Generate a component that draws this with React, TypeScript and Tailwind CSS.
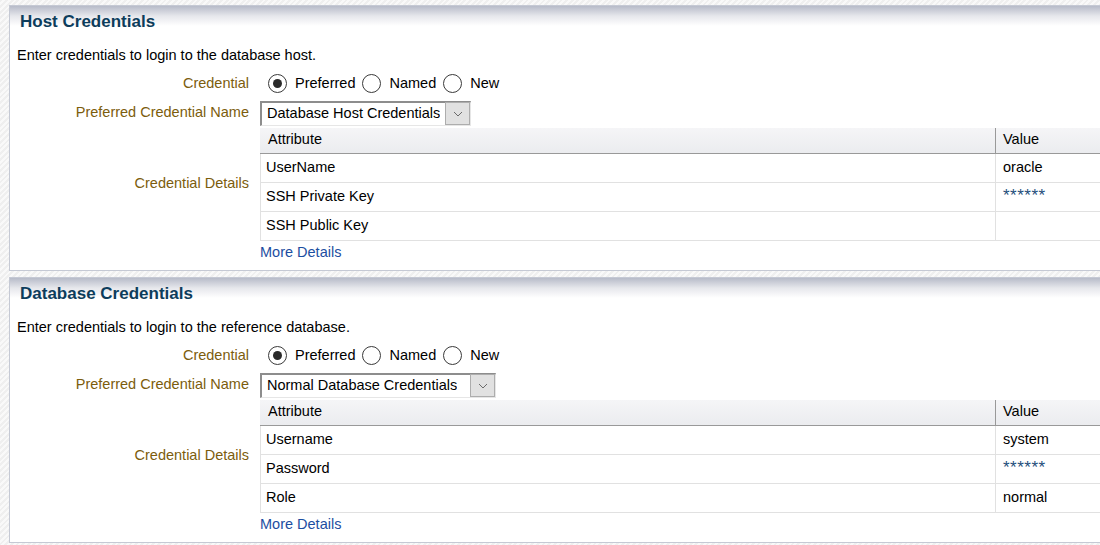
import { Fragment } from "react";

type Row = { attr: string; value: string; masked?: boolean };

type Section = {
  title: string;
  intro: string;
  credName: string;
  selectWidth: string;
  rows: Row[];
};

const sections: Section[] = [
  {
    title: "Host Credentials",
    intro: "Enter credentials to login to the database host.",
    credName: "Database Host Credentials",
    selectWidth: "w-[211px]",
    rows: [
      { attr: "UserName", value: "oracle" },
      { attr: "SSH Private Key", value: "******", masked: true },
      { attr: "SSH Public Key", value: "" },
    ],
  },
  {
    title: "Database Credentials",
    intro: "Enter credentials to login to the reference database.",
    credName: "Normal Database Credentials",
    selectWidth: "w-[236px]",
    rows: [
      { attr: "Username", value: "system" },
      { attr: "Password", value: "******", masked: true },
      { attr: "Role", value: "normal" },
    ],
  },
];

function Radio({ label, checked }: { label: string; checked?: boolean }) {
  return (
    <label className="flex items-center">
      <span className="flex h-[19px] w-[19px] items-center justify-center rounded-full border border-[#3a3a3a] bg-white">
        {checked && <span className="h-[9px] w-[9px] rounded-full bg-[#2a2a2a]" />}
      </span>
      <span className="ml-[8px] mr-[7px]">{label}</span>
    </label>
  );
}

function Select({ value, width }: { value: string; width: string }) {
  return (
    <div
      className={`flex h-[25px] items-center justify-between border-t-2 border-l-2 border-r border-b border-t-[#8d8d8d] border-l-[#8d8d8d] border-r-[#e6e6e6] border-b-[#e6e6e6] bg-white pl-[5px] ${width}`}
    >
      <span className="truncate">{value}</span>
      <span className="flex h-[23px] w-[25px] items-center justify-center border border-[#adadad] bg-[#e1e1e1]">
        <svg width="10" height="6" viewBox="0 0 10 6" fill="none">
          <path d="M1 1l4 4 4-4" stroke="#6b6b6b" strokeWidth="1" />
        </svg>
      </span>
    </div>
  );
}

function Label({ children }: { children: string }) {
  return <div className="pr-[11px] text-right text-[#7c5d0d]">{children}</div>;
}

function CredentialPanel({ s }: { s: Section }) {
  return (
    <div className="h-[266px] w-[1120px] border border-[#c5c9d4] bg-white">
      <div className="flex h-[30px] items-center bg-[linear-gradient(to_bottom,#b7bbc9_0px,#e6e7ec_10px,#ffffff_20px)] pl-[10px] pt-[1px]">
        <h2 className="text-[17px] font-bold text-[#0d3d5c]">{s.title}</h2>
      </div>
      <p className="mt-[9px] pl-[7px]">{s.intro}</p>
      <div className="mt-[3px] grid grid-cols-[250px_1fr] items-center">
        <Label>Credential</Label>
        <div className="flex h-[28px] items-center pl-[8px]">
          <Radio label="Preferred" checked />
          <Radio label="Named" />
          <Radio label="New" />
        </div>
        <Label>Preferred Credential Name</Label>
        <div className="flex h-[30px] items-center pt-[1px]">
          <Select value={s.credName} width={s.selectWidth} />
        </div>
        <Label>Credential Details</Label>
        <div>
          <div className="grid grid-cols-[735px_1fr]">
            <div className="flex h-[26px] items-center border-b border-[#999] bg-[linear-gradient(to_bottom,#f5f5f7,#ebecef)] pl-[8px]">
              Attribute
            </div>
            <div className="flex h-[26px] items-center border-b border-l border-[#999] bg-[linear-gradient(to_bottom,#f5f5f7,#ebecef)] pl-[7px]">
              Value
            </div>
            {s.rows.map((r) => (
              <Fragment key={r.attr}>
                <div className="flex h-[29px] items-center border-b border-l border-[#e1e1e1] pl-[5px]">
                  {r.attr}
                </div>
                <div
                  className={`flex h-[29px] items-center border-b border-l border-[#e1e1e1] pl-[7px] ${
                    r.masked ? "pb-[3px] text-[17px] tracking-[0.5px] text-[#1f4f7c]" : ""
                  }`}
                >
                  {r.value}
                </div>
              </Fragment>
            ))}
          </div>
        </div>
        <div />
        <a className="mt-[1px] block h-[20px] text-[#1c4ea1]" href="#">
          More Details
        </a>
      </div>
    </div>
  );
}

export default function App() {
  return (
    <div
      className="h-[545px] w-[1100px] overflow-hidden bg-[repeating-linear-gradient(135deg,#efefef_0px,#efefef_2px,#f9f9f9_2px,#f9f9f9_4px)] pl-[9px] pt-[5px] text-[14.5px] text-black"
      style={{ fontFamily: '"Liberation Sans", Arial, sans-serif' }}
    >
      <div className="flex flex-col gap-[6px]">
        {sections.map((s) => (
          <CredentialPanel key={s.title} s={s} />
        ))}
      </div>
    </div>
  );
}
